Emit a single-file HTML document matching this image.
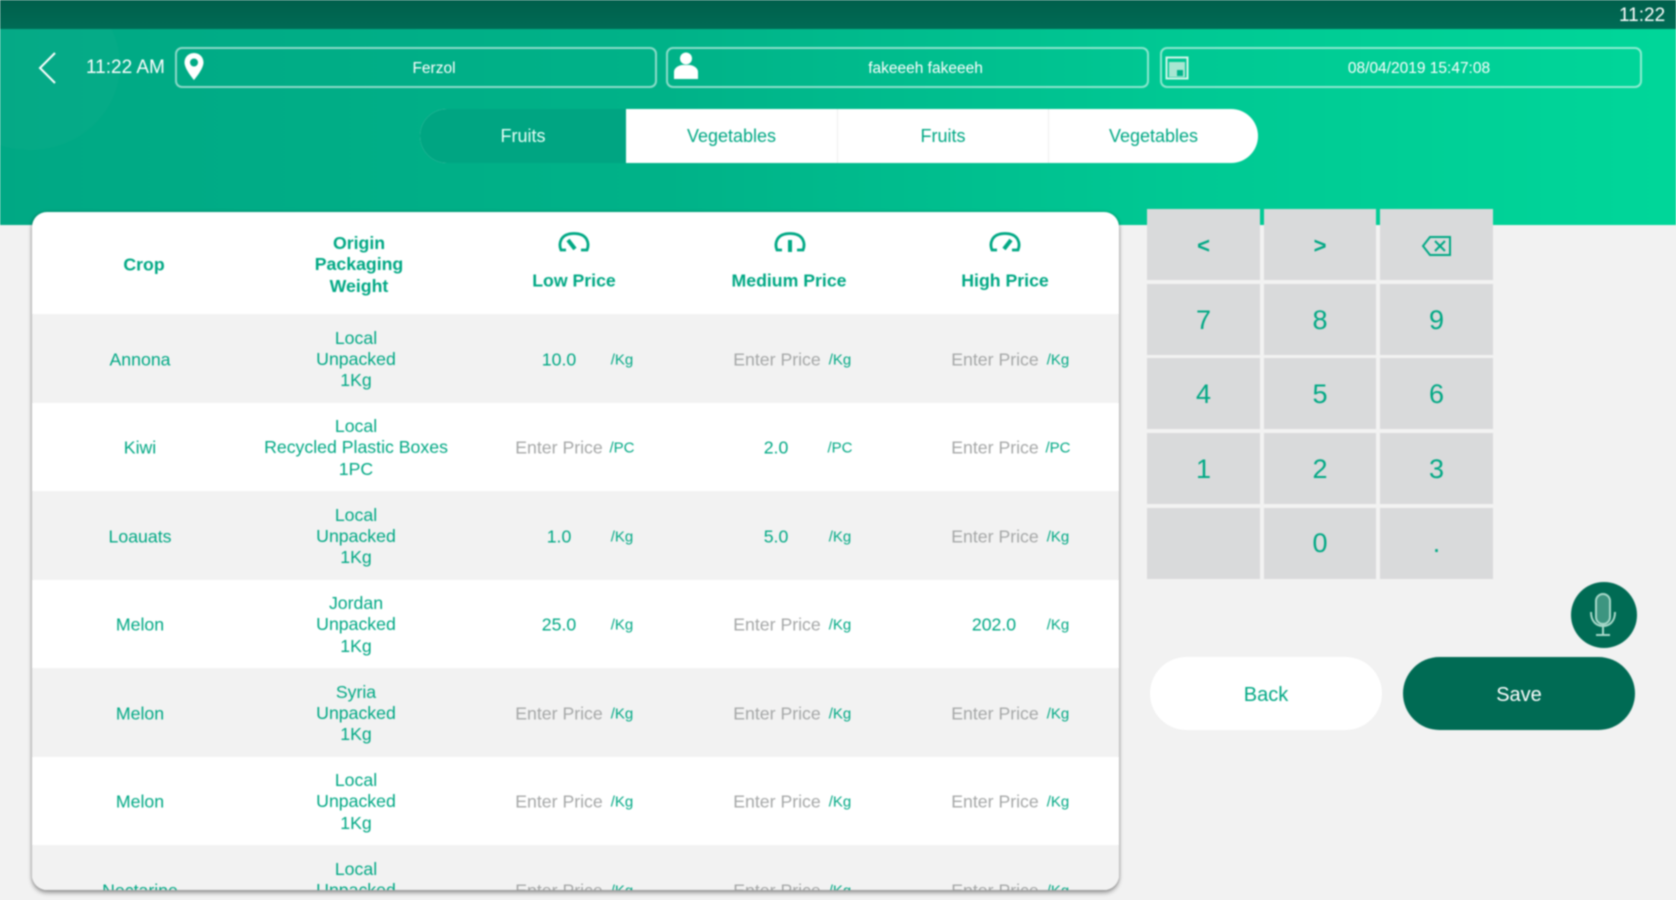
<!DOCTYPE html>
<html>
<head>
<meta charset="utf-8">
<style>
html,body{margin:0;padding:0;width:1676px;height:900px;overflow:hidden;background:#f2f2f2;font-family:"Liberation Sans",sans-serif}
*{box-sizing:border-box}
.a{position:absolute}
#wrap{position:absolute;left:0;top:0;width:1676px;height:900px;filter:blur(.7px);overflow:hidden}
#grad{position:absolute;left:0;top:0;width:1676px;height:225px;background:linear-gradient(90deg,#00a884 0%,#00b288 40%,#00c893 70%,#00d699 100%)}
#glow{position:absolute;left:-60px;top:-20px;width:180px;height:170px;border-radius:50%;background:rgba(255,255,255,.018)}
#status{position:absolute;left:0;top:0;width:1676px;height:29px;background:linear-gradient(180deg,#005f4b,#006b55)}
.field{position:absolute;top:47px;height:41px;border:2px solid rgba(255,255,255,.55);border-radius:7px;color:#fff;font-size:15.5px;text-align:center;line-height:40px;padding-left:36px}
.tabs{position:absolute;left:420px;top:109px;width:838px;height:54px;border-radius:27px;background:#fff;overflow:hidden}
.tab{position:absolute;top:0;height:54px;text-align:center;line-height:54px;font-size:18px;color:#00a884}
#card{position:absolute;left:32px;top:212px;width:1087px;height:678px;background:#fff;border-radius:15px;overflow:hidden;box-shadow:0 3px 4px rgba(0,0,0,.35),-1px 0 3px rgba(0,0,0,.12),1px 0 3px rgba(0,0,0,.12)}
.row{position:absolute;left:0;width:1087px;height:88.5px}
.g{background:#f2f2f2}
.t{position:absolute;transform:translate(-50%,-50%);text-align:center;white-space:nowrap;color:#00a884;font-size:17.7px;line-height:21.3px;top:45.5px}
.p{color:#a5a7a7}
.v{color:#00a884}
.u{font-size:15px;margin-left:1px}
.h{position:absolute;transform:translate(-50%,-50%);text-align:center;white-space:nowrap;color:#00a884;font-size:17.7px;font-weight:bold;line-height:21.3px}
.k{position:absolute;background:#d9dadb;color:#00a884;text-align:center;font-size:27px}
.n{line-height:73px}
.btn{position:absolute;top:657px;height:73px;width:232px;border-radius:37px;text-align:center;line-height:77px;font-size:20px}
</style>
</head>
<body>
<div id="wrap">
<div id="grad"></div>
<div id="glow"></div>
<div id="status"></div>
<div class="a" style="left:1619px;top:6px;color:#fff;font-size:19px;line-height:20px">11:22</div>

<svg class="a" style="left:36px;top:50px" width="24" height="36" viewBox="0 0 24 36"><path d="M19 3 L4 18 L19 33" fill="none" stroke="#fff" stroke-width="2"/></svg>
<div class="a" style="left:86px;top:57px;color:#fff;font-size:19px;line-height:22px;white-space:nowrap">11:22 AM</div>

<div class="field" style="left:175px;width:482px">Ferzol</div>
<svg class="a" style="left:182px;top:52px" width="24" height="30" viewBox="0 0 24 30"><path fill-rule="evenodd" fill="#fff" d="M12 1C6.500 1 2.500 5.200 2.500 10.500 2.500 17 12 28 12 28S21.500 17 21.500 10.500C21.500 5.200 17.500 1 12 1ZM12 6.500A4 4 0 1 1 12 14.500 4 4 0 0 1 12 6.500Z"/></svg>

<div class="field" style="left:666px;width:483px">fakeeeh fakeeeh</div>
<svg class="a" style="left:672px;top:51px" width="28" height="30" viewBox="0 0 28 30"><circle cx="14" cy="7.500" r="6" fill="#fff"/><path fill="#fff" d="M2 28V21C2 16.500 7 14.500 10 14H18C21 14.500 26 16.500 26 21V28Z"/></svg>

<div class="field" style="left:1160px;width:482px">08/04/2019 15:47:08</div>
<svg class="a" style="left:1165px;top:56px" width="24" height="24" viewBox="0 0 24 24"><rect x="1.500" y="1.500" width="21" height="21" fill="none" stroke="#d5f5ea" stroke-width="2"/><rect x="4" y="6" width="16" height="15" fill="#a8e6d2"/><rect x="12" y="14" width="6" height="6" fill="#00b288"/></svg>

<div class="tabs">
  <div class="tab" style="left:0;width:206px;background:#00a582;color:#e6fff7">Fruits</div>
  <div class="tab" style="left:206px;width:211px">Vegetables</div>
  <div class="tab" style="left:417px;width:211px;border-left:1px solid #eee">Fruits</div>
  <div class="tab" style="left:628px;width:210px;border-left:1px solid #eee">Vegetables</div>
</div>

<div id="card">
  <div class="h" style="left:112px;top:53px">Crop</div>
  <div class="h" style="left:327px;top:53px">Origin<br>Packaging<br>Weight</div>
  <svg class="a" style="left:525px;top:19px" width="34" height="24" viewBox="0 0 34 24" fill="none" stroke="#00a884" stroke-width="2.800"><path d="M9 19H4C1.500 13 3 2.500 17 2.500S32.500 13 30 19H24"/><path d="M11 9L18 18" stroke-width="4"/></svg>
  <svg class="a" style="left:741px;top:19px" width="34" height="24" viewBox="0 0 34 24" fill="none" stroke="#00a884" stroke-width="2.800"><path d="M9 19H4C1.500 13 3 2.500 17 2.500S32.500 13 30 19H24"/><path d="M17 9V21" stroke-width="4"/></svg>
  <svg class="a" style="left:956px;top:19px" width="34" height="24" viewBox="0 0 34 24" fill="none" stroke="#00a884" stroke-width="2.800"><path d="M9 19H4C1.500 13 3 2.500 17 2.500S32.500 13 30 19H24"/><path d="M23 9L16 18" stroke-width="4"/></svg>
  <div class="h" style="left:542px;top:69px">Low Price</div>
  <div class="h" style="left:757px;top:69px">Medium Price</div>
  <div class="h" style="left:973px;top:69px">High Price</div>

  <div class="row g" style="top:102px">
    <div class="t" style="left:108px">Annona</div><div class="t" style="left:324px">Local<br>Unpacked<br>1Kg</div>
    <div class="t v" style="left:527px">10.0</div><div class="t u" style="left:589px">/Kg</div>
    <div class="t p" style="left:745px">Enter Price</div><div class="t u" style="left:807px">/Kg</div>
    <div class="t p" style="left:963px">Enter Price</div><div class="t u" style="left:1025px">/Kg</div>
  </div>
  <div class="row" style="top:190.500px">
    <div class="t" style="left:108px">Kiwi</div><div class="t" style="left:324px">Local<br>Recycled Plastic Boxes<br>1PC</div>
    <div class="t p" style="left:527px">Enter Price</div><div class="t u" style="left:589px">/PC</div>
    <div class="t v" style="left:744px">2.0</div><div class="t u" style="left:807px">/PC</div>
    <div class="t p" style="left:963px">Enter Price</div><div class="t u" style="left:1025px">/PC</div>
  </div>
  <div class="row g" style="top:279px">
    <div class="t" style="left:108px">Loauats</div><div class="t" style="left:324px">Local<br>Unpacked<br>1Kg</div>
    <div class="t v" style="left:527px">1.0</div><div class="t u" style="left:589px">/Kg</div>
    <div class="t v" style="left:744px">5.0</div><div class="t u" style="left:807px">/Kg</div>
    <div class="t p" style="left:963px">Enter Price</div><div class="t u" style="left:1025px">/Kg</div>
  </div>
  <div class="row" style="top:367.500px">
    <div class="t" style="left:108px">Melon</div><div class="t" style="left:324px">Jordan<br>Unpacked<br>1Kg</div>
    <div class="t v" style="left:527px">25.0</div><div class="t u" style="left:589px">/Kg</div>
    <div class="t p" style="left:745px">Enter Price</div><div class="t u" style="left:807px">/Kg</div>
    <div class="t v" style="left:962px">202.0</div><div class="t u" style="left:1025px">/Kg</div>
  </div>
  <div class="row g" style="top:456px">
    <div class="t" style="left:108px">Melon</div><div class="t" style="left:324px">Syria<br>Unpacked<br>1Kg</div>
    <div class="t p" style="left:527px">Enter Price</div><div class="t u" style="left:589px">/Kg</div>
    <div class="t p" style="left:745px">Enter Price</div><div class="t u" style="left:807px">/Kg</div>
    <div class="t p" style="left:963px">Enter Price</div><div class="t u" style="left:1025px">/Kg</div>
  </div>
  <div class="row" style="top:544.500px">
    <div class="t" style="left:108px">Melon</div><div class="t" style="left:324px">Local<br>Unpacked<br>1Kg</div>
    <div class="t p" style="left:527px">Enter Price</div><div class="t u" style="left:589px">/Kg</div>
    <div class="t p" style="left:745px">Enter Price</div><div class="t u" style="left:807px">/Kg</div>
    <div class="t p" style="left:963px">Enter Price</div><div class="t u" style="left:1025px">/Kg</div>
  </div>
  <div class="row g" style="top:633px">
    <div class="t" style="left:108px">Nectarine</div><div class="t" style="left:324px">Local<br>Unpacked<br>1Kg</div>
    <div class="t p" style="left:527px">Enter Price</div><div class="t u" style="left:589px">/Kg</div>
    <div class="t p" style="left:745px">Enter Price</div><div class="t u" style="left:807px">/Kg</div>
    <div class="t p" style="left:963px">Enter Price</div><div class="t u" style="left:1025px">/Kg</div>
  </div>
</div>

<div class="k" style="left:1147px;top:209px;width:113px;height:71px;line-height:74px;font-size:22px;font-weight:bold">&lt;</div>
<div class="k" style="left:1264px;top:209px;width:112px;height:71px;line-height:74px;font-size:22px;font-weight:bold">&gt;</div>
<div class="k" style="left:1380px;top:209px;width:113px;height:71px"></div>
<svg class="a" style="left:1421px;top:235px" width="32" height="22" viewBox="0 0 32 22" fill="none" stroke="#00a884" stroke-width="2"><path d="M9 2H29V20H9L2 11Z"/><path d="M14 6L24 16M24 6L14 16"/></svg>

<div class="k n" style="left:1147px;top:284px;width:113px;height:71px">7</div>
<div class="k n" style="left:1264px;top:284px;width:112px;height:71px">8</div>
<div class="k n" style="left:1380px;top:284px;width:113px;height:71px">9</div>
<div class="k n" style="left:1147px;top:358px;width:113px;height:71px">4</div>
<div class="k n" style="left:1264px;top:358px;width:112px;height:71px">5</div>
<div class="k n" style="left:1380px;top:358px;width:113px;height:71px">6</div>
<div class="k n" style="left:1147px;top:433px;width:113px;height:71px">1</div>
<div class="k n" style="left:1264px;top:433px;width:112px;height:71px">2</div>
<div class="k n" style="left:1380px;top:433px;width:113px;height:71px">3</div>
<div class="k" style="left:1147px;top:508px;width:113px;height:71px"></div>
<div class="k" style="left:1264px;top:508px;width:112px;height:71px;line-height:71px">0</div>
<div class="k" style="left:1380px;top:508px;width:113px;height:71px;line-height:71px">.</div>

<div class="a" style="left:1571px;top:582px;width:66px;height:66px;border-radius:50%;background:#006b54"></div>
<svg class="a" style="left:1585px;top:590px" width="36" height="50" viewBox="0 0 36 50" fill="none" stroke="#a9d9ca" stroke-width="2"><rect x="11" y="4" width="14" height="30" rx="7" fill="#3d9580"/><path d="M6 22C6 32 12 36 18 36S30 32 30 22M18 36V44M11 45H25"/></svg>

<div class="btn" style="left:1150px;background:#fff;color:#00a884">Back</div>
<div class="btn" style="left:1403px;background:#006b54;color:#fff">Save</div>
</div>
</body>
</html>
